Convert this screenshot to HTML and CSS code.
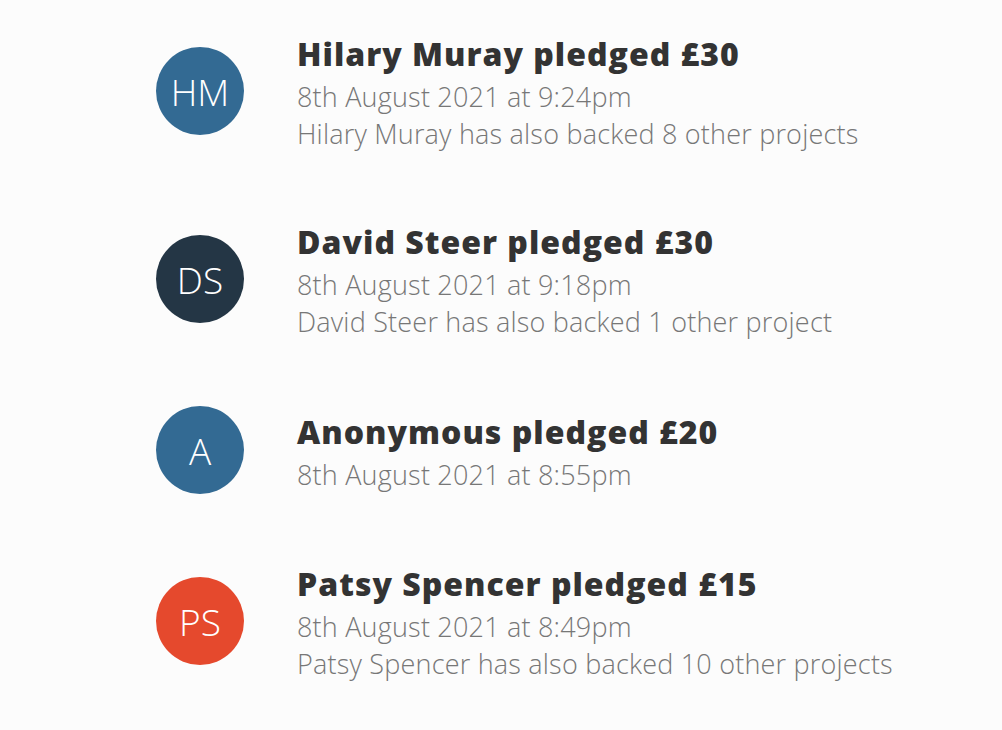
FILE: index.html
```html
<!DOCTYPE html>
<html>
<head>
<meta charset="utf-8">
<link rel="stylesheet" href="styles.css">
</head>
<body>
<ul class="pledges">
  <li class="pledge">
    <div class="avatar blue">HM</div>
    <div class="info">
      <div class="title">Hilary Muray pledged £30</div>
      <div class="meta">8th August 2021 at 9:24pm</div>
      <div class="meta">Hilary Muray has also backed 8 other projects</div>
    </div>
  </li>
  <li class="pledge">
    <div class="avatar dark">DS</div>
    <div class="info">
      <div class="title">David Steer pledged £30</div>
      <div class="meta">8th August 2021 at 9:18pm</div>
      <div class="meta">David Steer has also backed 1 other project</div>
    </div>
  </li>
  <li class="pledge">
    <div class="avatar blue">A</div>
    <div class="info">
      <div class="title">Anonymous pledged £20</div>
      <div class="meta">8th August 2021 at 8:55pm</div>
    </div>
  </li>
  <li class="pledge">
    <div class="avatar red">PS</div>
    <div class="info">
      <div class="title">Patsy Spencer pledged £15</div>
      <div class="meta">8th August 2021 at 8:49pm</div>
      <div class="meta">Patsy Spencer has also backed 10 other projects</div>
    </div>
  </li>
</ul>
</body>
</html>
```
FILE: styles.css
```css
html, body {
  margin: 0;
  padding: 0;
  background: #fcfcfc;
}
body {
  font-family: "Open Sans", "Noto Sans", sans-serif;
}
.pledges {
  list-style: none;
  margin: 0;
  padding: 30px 0 0 156px;
  display: flex;
  flex-direction: column;
  gap: 66px;
}
.pledge {
  display: flex;
  align-items: center;
  gap: 53px;
}
.avatar {
  width: 88px;
  height: 88px;
  border-radius: 50%;
  flex: none;
  display: flex;
  align-items: center;
  justify-content: center;
  color: #ffffff;
  font-size: 37px;
  font-weight: 300;
}
.blue { background: #336a93; }
.dark { background: #243645; }
.red { background: #e5492d; }
.info {
  display: flex;
  flex-direction: column;
}
.title {
  font-size: 32px;
  font-weight: 800;
  color: #333333;
  line-height: 48px;
  letter-spacing: 1px;
}
.meta {
  font-size: 27px;
  font-weight: 300;
  color: #777777;
  line-height: 37px;
  letter-spacing: 0.2px;
}
```
